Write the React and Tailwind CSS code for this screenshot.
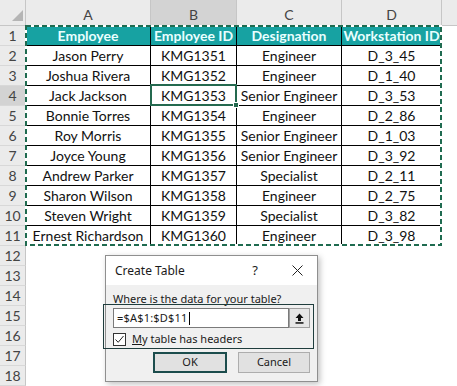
import React from 'react';

const rows = [
  ['Jason Perry', 'KMG1351', 'Engineer', 'D_3_45'],
  ['Joshua Rivera', 'KMG1352', 'Engineer', 'D_1_40'],
  ['Jack Jackson', 'KMG1353', 'Senior Engineer', 'D_3_53'],
  ['Bonnie Torres', 'KMG1354', 'Engineer', 'D_2_86'],
  ['Roy Morris', 'KMG1355', 'Senior Engineer', 'D_1_03'],
  ['Joyce Young', 'KMG1356', 'Senior Engineer', 'D_3_92'],
  ['Andrew Parker', 'KMG1357', 'Specialist', 'D_2_11'],
  ['Sharon Wilson', 'KMG1358', 'Engineer', 'D_2_75'],
  ['Steven Wright', 'KMG1359', 'Specialist', 'D_3_82'],
  ['Ernest Richardson', 'KMG1360', 'Engineer', 'D_3_98'],
];

const headers = ['Employee', 'Employee ID', 'Designation', 'Workstation ID'];
const widths = ['w-[125px]', 'w-[86px]', 'w-[105px]', 'w-[100px]'];

function RowHead({ n, active }) {
  return (
    <div
      className={`w-[26px] shrink-0 h-full flex items-center justify-center border-r border-b border-r-[#c6c6c6] border-b-[#d8d8d8] text-[14px] text-[#444] ${
        active ? 'bg-[#d3d3d3]' : 'bg-[#ebebeb]'
      }`}
    >
      {n}
    </div>
  );
}

function Sheet() {
  return (
    <div className="flex flex-col">
      {/* column letters */}
      <div className="flex h-[26px]">
        <div className="w-[26px] shrink-0 border-r border-b border-[#c6c6c6] bg-[#ebebeb] relative">
          <svg className="absolute left-[12px] top-[10px]" width="11" height="11" viewBox="0 0 11 11">
            <polygon points="11,0 11,11 0,11" fill="#b5b5b5" />
          </svg>
        </div>
        {['A', 'B', 'C', 'D'].map((c, i) => (
          <div
            key={c}
            className={`${widths[i]} shrink-0 border-r border-b border-[#c6c6c6] flex items-center justify-center pt-[3px] text-[14px] text-[#444] ${
              c === 'B' ? 'bg-[#d3d3d3]' : 'bg-[#ebebeb]'
            }`}
          >
            {c}
          </div>
        ))}
        <div className="flex-1 border-b border-[#c6c6c6] bg-[#ebebeb]" />
      </div>

      {/* header row */}
      <div className="flex h-[20px]">
        <RowHead n={1} />
        {headers.map((h, i) => (
          <div
            key={h}
            className={`${widths[i]} shrink-0 border-r border-b border-black bg-[#17a2a2] text-[#e9ffff] font-bold text-[14px] flex items-center justify-center`}
          >
            {h}
          </div>
        ))}
        <div className="flex-1" />
      </div>

      {/* data rows */}
      {rows.map((r, ri) => (
        <div key={ri} className="flex h-[20px]">
          <RowHead n={ri + 2} active={ri === 2} />
          {r.map((v, i) => (
            <div
              key={i}
              className={`${widths[i]} shrink-0 border-r border-b border-black text-[14px] text-[#111] flex items-center justify-center`}
            >
              {v}
            </div>
          ))}
          <div className="flex-1" />
        </div>
      ))}

      {/* empty rows */}
      {[12, 13, 14, 15, 16, 17, 18].map((n) => (
        <div key={n} className="flex h-[20px]">
          <RowHead n={n} />
          <div className="flex-1" />
        </div>
      ))}
    </div>
  );
}

function Dialog() {
  return (
    <div className="absolute left-[105px] top-[255px] w-[213px] h-[127px] border border-[#8f8f8f] bg-[#f0f0f0] shadow-[2px_2px_6px_rgba(0,0,0,0.25)] flex flex-col font-['Noto_Sans',sans-serif] text-[#1a1a1a]">
      <div className="h-[29px] bg-white flex items-center pl-[9px] pr-[14px] text-[12px]">
        <span className="flex-1">Create Table</span>
        <span className="mr-[34px] text-[13px]">?</span>
        <svg width="11" height="11" viewBox="0 0 11 11">
          <path d="M0.5 0.5 L10.5 10.5 M10.5 0.5 L0.5 10.5" stroke="#222" strokeWidth="1" />
        </svg>
      </div>
      <div className="flex-1 flex flex-col px-[7px] pt-[7px]">
        <div className="text-[11px] leading-[14px]">Where is the data for your table?</div>
        <div className="mt-[2px] flex h-[20px]">
          <div className="flex-1 bg-white border border-[#7a7a7a] flex items-center pl-[3px] text-[11px] tracking-[0.2px]">
            =$A$1:$D$11<span className="ml-[1px] w-px h-[13px] bg-black" />
          </div>
          <div className="w-[21px] border border-[#a0a0a0] bg-[#e6e6e6] flex items-center justify-center">
            <svg width="9" height="11" viewBox="0 0 9 11">
              <path d="M4.5 0.5 L8.5 5 H6 V8 H3 V5 H0.5 Z" fill="#111" />
              <rect x="0.5" y="9.2" width="8" height="1.5" fill="#111" />
            </svg>
          </div>
        </div>
        <div className="mt-[4px] flex items-center h-[14px] text-[11px]">
          <div className="w-[13px] h-[13px] border border-[#333] bg-white flex items-center justify-center">
            <svg width="11" height="11" viewBox="0 0 11 11">
              <polyline points="1.5,5.5 4.2,8.3 9.5,2" fill="none" stroke="#222" strokeWidth="1" />
            </svg>
          </div>
          <span className="ml-[6px]">
            <span className="underline">M</span>y table has headers
          </span>
        </div>
        <div className="mt-[6px] flex gap-[11px] pl-[40px]">
          <div className="w-[75px] h-[21px] border-2 border-[#1c4d4d] bg-[#e1e1e1] flex items-center justify-center text-[11px]">
            OK
          </div>
          <div className="w-[73px] h-[21px] border border-[#adadad] bg-[#e1e1e1] flex items-center justify-center text-[11px]">
            Cancel
          </div>
        </div>
      </div>
    </div>
  );
}

export default function App() {
  return (
    <div className="relative w-[457px] h-[386px] overflow-hidden bg-white font-['Lato',sans-serif]">
      <Sheet />

      {/* copy range marching ants */}
      <svg className="absolute left-0 top-0 pointer-events-none" width="457" height="386">
        <rect x="26" y="26" width="415" height="219" fill="none" stroke="#ffffff" strokeWidth="2" />
        <rect x="26" y="26" width="415" height="219" fill="none" stroke="#1f6b50" strokeWidth="2" strokeDasharray="5 3" />
      </svg>

      {/* active cell B4 */}
      <div className="absolute left-[150px] top-[84px] w-[87px] h-[22px] border-2 border-[#24694f]" />
      <div className="absolute left-[233px] top-[102px] w-[6px] h-[6px] bg-[#24694f] border border-white" />

      <Dialog />

      {/* focus outline round the range input */}
      <div className="absolute left-[103px] top-[304px] w-[211px] h-[45px] border border-[#1f3d3d]" />
    </div>
  );
}
